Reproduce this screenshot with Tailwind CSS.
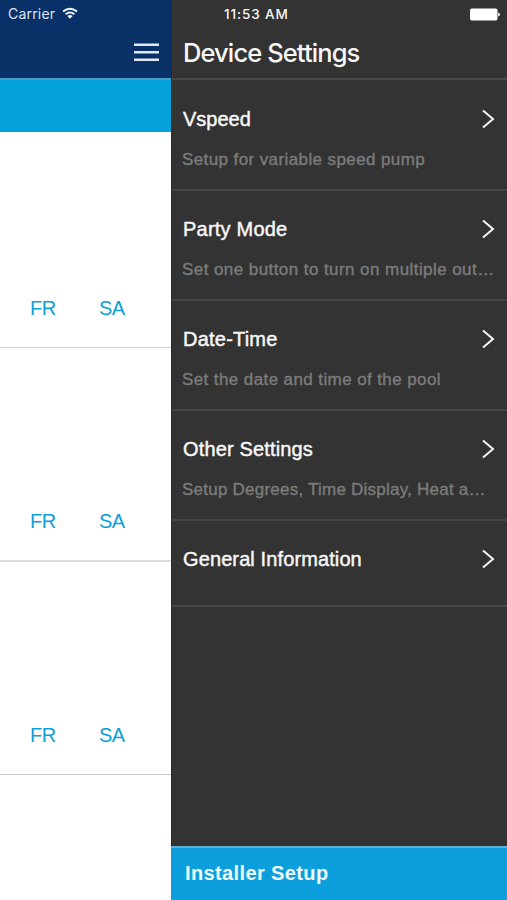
<!DOCTYPE html>
<html lang="en">
<head>
<meta charset="utf-8">
<title>Device Settings</title>
<script src="https://cdn.jsdelivr.net/npm/@tailwindcss/browser@4"></script>
</head>
<body class="w-[507px] h-[900px] overflow-hidden bg-white font-['Liberation_Sans',sans-serif]">
<div class="flex w-[507px] h-[900px]">
  <div class="w-[171px] shrink-0 flex flex-col bg-white text-[#0c9fd9]">
    <header class="h-[78px] shrink-0 bg-[#0a3068] text-[#dbe6f5]">
      <div class="h-[28px] pl-2 flex items-center gap-[6px] font-[Inter,sans-serif] text-[14px]">
        <span class="w-[48px] -mt-px whitespace-nowrap tracking-[0.2px]">Carrier</span>
        <svg class="w-4 h-3 -mt-[3px]" viewBox="0 0 16 12" fill="none" stroke="#eef4fc" stroke-width="2"><path d="M1 4.6Q8 -1.2 15 4.6M3.6 7.2Q8 3.8 12.4 7.2"/><path d="M5.3 9Q8 7 10.7 9L8 11.8Z" fill="#eef4fc" stroke="none"/></svg>
      </div>
      <div class="h-[50px] flex justify-end pr-3 pt-[15px]">
        <svg class="w-[25px] h-[19px]" viewBox="0 0 25 19" fill="#dfe8f5"><path d="M0 .4h25v2.7H0zM0 7.9h25v2.7H0zM0 15.4h25v2.7H0z"/></svg>
      </div>
    </header>
    <div class="h-[54px] shrink-0 bg-[#04a1db] border-t-2 border-[#4a9cc4]"></div>
    <div class="h-[216px] shrink-0 border-b border-[#cfcfcf] flex items-end pb-[27px] pl-[30px] text-[20px] leading-6 tracking-[-0.5px]"><span class="w-[69px]">FR</span><span>SA</span></div>
    <div class="h-[214px] shrink-0 border-b-2 border-[#dfdfdf] flex items-end pb-[27px] pl-[30px] text-[20px] leading-6 tracking-[-0.5px]"><span class="w-[69px]">FR</span><span>SA</span></div>
    <div class="h-[213px] shrink-0 border-b border-[#cfcfcf] flex items-end pb-[27px] pl-[30px] text-[20px] leading-6 tracking-[-0.5px]"><span class="w-[69px]">FR</span><span>SA</span></div>
  </div>
  <aside class="w-[336px] flex flex-col bg-[#333333] text-[#f7f7f7] border-l border-[#292929]">
    <header class="h-[80px] shrink-0 border-b-2 border-[#494949] font-[Inter,sans-serif]">
      <div class="h-[28px] pl-[52px] pr-[7px] flex items-center justify-between">
        <span class="text-[13.5px] font-medium tracking-[0.9px] whitespace-nowrap">11:53 AM</span>
        <svg class="w-[30px] h-[13px]" viewBox="0 0 30 13" fill="#fff"><rect y=".5" width="27.5" height="12" rx="1.8"/><path d="M28.2 4.5Q30 5 30 6.5T28.2 8.5Z"/></svg>
      </div>
      <h1 class="pl-[11px] text-[25.5px] leading-[50px] font-medium tracking-[-0.9px] whitespace-nowrap">Device Settings</h1>
    </header>
    <section class="h-[111px] shrink-0 border-b-2 border-[#454545] pl-[11px] pr-3 pt-[27px]">
      <div class="flex justify-between items-center h-6"><h2 class="text-[20px] [-webkit-text-stroke:0.45px]">Vspeed</h2><svg class="w-[13px] h-[20px]" viewBox="0 0 13 20" fill="none" stroke="#f7f7f7" stroke-width="2"><path d="M1 1.5 11 10 1 18.5"/></svg></div>
      <p class="-ml-px mt-[17px] leading-6 text-[17px] tracking-[0.4px] text-[#7c7c7c] [-webkit-text-stroke:0.35px] whitespace-nowrap">Setup for variable speed pump</p>
    </section>
    <section class="h-[110px] shrink-0 border-b-2 border-[#454545] pl-[11px] pr-3 pt-[26px]">
      <div class="flex justify-between items-center h-6"><h2 class="text-[20px] tracking-[0.22px] [-webkit-text-stroke:0.45px]">Party Mode</h2><svg class="w-[13px] h-[20px]" viewBox="0 0 13 20" fill="none" stroke="#f7f7f7" stroke-width="2"><path d="M1 1.5 11 10 1 18.5"/></svg></div>
      <p class="-ml-px mt-[17px] leading-6 text-[17px] tracking-[0.43px] text-[#7c7c7c] [-webkit-text-stroke:0.35px] whitespace-nowrap">Set one button to turn on multiple out…</p>
    </section>
    <section class="h-[110px] shrink-0 border-b-2 border-[#454545] pl-[11px] pr-3 pt-[26px]">
      <div class="flex justify-between items-center h-6"><h2 class="text-[20px] tracking-[0.22px] [-webkit-text-stroke:0.45px]">Date-Time</h2><svg class="w-[13px] h-[20px]" viewBox="0 0 13 20" fill="none" stroke="#f7f7f7" stroke-width="2"><path d="M1 1.5 11 10 1 18.5"/></svg></div>
      <p class="-ml-px mt-[17px] leading-6 text-[17px] tracking-[0.4px] text-[#7c7c7c] [-webkit-text-stroke:0.35px] whitespace-nowrap">Set the date and time of the pool</p>
    </section>
    <section class="h-[110px] shrink-0 border-b-2 border-[#454545] pl-[11px] pr-3 pt-[26px]">
      <div class="flex justify-between items-center h-6"><h2 class="text-[20px] tracking-[0.15px] [-webkit-text-stroke:0.45px]">Other Settings</h2><svg class="w-[13px] h-[20px]" viewBox="0 0 13 20" fill="none" stroke="#f7f7f7" stroke-width="2"><path d="M1 1.5 11 10 1 18.5"/></svg></div>
      <p class="-ml-px mt-[17px] leading-6 text-[17px] tracking-[0.23px] text-[#7c7c7c] [-webkit-text-stroke:0.35px] whitespace-nowrap">Setup Degrees, Time Display, Heat a…</p>
    </section>
    <section class="h-[86px] shrink-0 border-b-2 border-[#494949] pl-[11px] pr-3 pt-[26px]">
      <div class="flex justify-between items-center h-6"><h2 class="text-[20px] tracking-[0.11px] [-webkit-text-stroke:0.45px]">General Information</h2><svg class="w-[13px] h-[20px]" viewBox="0 0 13 20" fill="none" stroke="#f7f7f7" stroke-width="2"><path d="M1 1.5 11 10 1 18.5"/></svg></div>
    </section>
    <footer class="mt-auto h-[54px] shrink-0 -ml-px border-t-2 border-[#5fb0d2] bg-[#0d9fdb] pl-[14px] text-[20px] font-bold tracking-[0.38px] leading-[51px] text-[#eefaff]">Installer Setup</footer>
  </aside>
</div>
</body>
</html>
